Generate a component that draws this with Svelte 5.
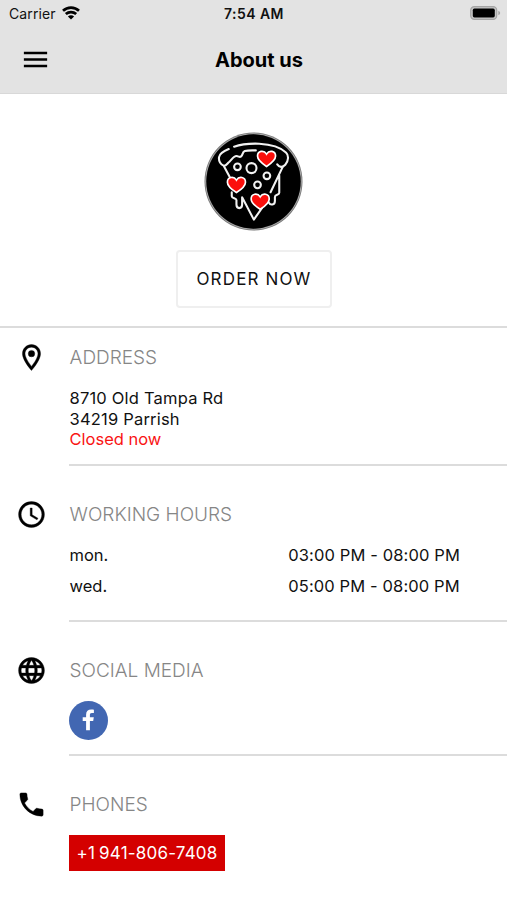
<script lang="ts">
    interface Hours {
        day: string;
        time: string;
    }

    const address = ["8710 Old Tampa Rd", "34219 Parrish"];
    const hours: Hours[] = [
        { day: "mon.", time: "03:00 PM - 08:00 PM" },
        { day: "wed.", time: "05:00 PM - 08:00 PM" },
    ];
    const phone = "+1 941-806-7408";
    const heart =
        "M0 23 C-11 16 -27 5 -27 -8 C-27 -24 -8 -27 0 -14 C8 -27 27 -24 27 -8 C27 5 11 16 0 23Z";
    const hearts = ["translate(216 103)", "translate(126 181)", "translate(197 231)"];
</script>

<div class="page">
    <div class="status">
        <div class="carrier">
            <span>Carrier</span>
            <svg class="wifi" viewBox="0 0 18 14">
                <path d="M1 4.8C5.5 .6 12.5 .6 17 4.8" />
                <path d="M3.8 8.1c3-2.7 7.4-2.7 10.4 0" />
                <path class="dot" d="M5.9 10.4c1.8-1.5 4.4-1.5 6.2 0L9 13.5z" />
            </svg>
        </div>
        <span class="clock">7:54 AM</span>
        <svg class="battery" viewBox="0 0 31 14">
            <rect x="0.7" y="0.7" width="26" height="12.6" rx="3.6" fill="#c6c6c6" stroke="#a5a5a5" stroke-width="1.2" />
            <rect x="2.8" y="2.6" width="22" height="8.8" rx="1.6" fill="#000" />
            <path d="M28.3 4.8q1.9.7 1.9 2.2t-1.9 2.2z" fill="#a5a5a5" />
        </svg>
    </div>

    <header>
        <button class="menu" aria-label="Menu">
            <svg viewBox="0 0 24 24"><path d="M3 18h18v-2H3v2zm0-5h18v-2H3v2zm0-7v2h18V6H3z" /></svg>
        </button>
        <h1>About us</h1>
    </header>

    <div class="hero">
        <svg class="logo" viewBox="29 23 296 296">
            <circle cx="177" cy="171" r="146.5" fill="#777" />
            <circle cx="177" cy="171" r="143" fill="none" stroke="#ddd" stroke-width="1.5" />
            <circle cx="177" cy="171" r="141" fill="#000" />
            <g class="lines">
                <path d="M103 74C88 80 76 88 74 98c-2 12 5 23 14 26 8 1 10-7 17-12 8-8 13-17 21-17 7 0 9 5 14 1 6-5 3-13 11-16 10-3 22-2 33-2" />
                <path d="M119 67c22-8 47-10 75-9 36 2 63 10 80 26 9 8 8 26-2 37-8 9-18 8-24-1" />
                <path d="M89 126l19 35M112 203v12c0 7 14 5 14 11v14c0 14 17 14 17 0v-22l35 67 24-34M264 128l-36 75M254 153v52c0 7-13 4-13 12v12c0 13-14 14-18 5" />
                <circle cx="129" cy="127" r="10" />
                <circle cx="171" cy="131" r="15" />
                <circle cx="217" cy="154" r="10" />
                <circle cx="189" cy="181" r="10" />
            </g>
            {#each hearts as place}
                <path class="heart" d={heart} transform={place} />
            {/each}
        </svg>
        <button class="order">ORDER NOW</button>
    </div>

    <section>
        <svg class="icon" viewBox="0 0 24 24">
            <path d="M12 2C8.13 2 5 5.13 5 9c0 5.25 7 13 7 13s7-7.75 7-13c0-3.87-3.13-7-7-7zM7 9c0-2.76 2.24-5 5-5s5 2.24 5 5c0 2.88-2.88 7.19-5 9.88C9.92 16.21 7 11.85 7 9z" />
            <circle cx="12" cy="9" r="2.5" />
        </svg>
        <div class="content">
            <h2>ADDRESS</h2>
            <div class="address">
                {#each address as line}
                    <div class="line">{line}</div>
                {/each}
                <div class="closed">Closed now</div>
            </div>
        </div>
    </section>

    <section>
        <svg class="icon" viewBox="0 0 24 24">
            <path d="M11.99 2C6.47 2 2 6.48 2 12s4.47 10 9.99 10C17.52 22 22 17.52 22 12S17.52 2 11.99 2zM12 20c-4.42 0-8-3.58-8-8s3.58-8 8-8 8 3.58 8 8-3.58 8-8 8zm.5-13H11v6l5.25 3.15.75-1.23-4.5-2.67z" />
        </svg>
        <div class="content">
            <h2>WORKING HOURS</h2>
            <div class="hours">
                {#each hours as { day, time }}
                    <div class="row">
                        <span>{day}</span>
                        <span class="time">{time}</span>
                    </div>
                {/each}
            </div>
        </div>
    </section>

    <section>
        <svg class="icon" viewBox="0 0 24 24">
            <path d="M11.99 2C6.47 2 2 6.48 2 12s4.47 10 9.99 10C17.52 22 22 17.52 22 12S17.52 2 11.99 2zm6.93 6h-2.95c-.32-1.25-.78-2.45-1.38-3.56 1.84.63 3.37 1.91 4.33 3.56zM12 4.04c.83 1.2 1.48 2.53 1.91 3.96h-3.82c.43-1.43 1.08-2.76 1.91-3.96zM4.26 14C4.1 13.36 4 12.69 4 12s.1-1.36.26-2h3.38c-.08.66-.14 1.32-.14 2s.06 1.34.14 2H4.26zm.82 2h2.95c.32 1.25.78 2.45 1.38 3.56-1.84-.63-3.37-1.9-4.33-3.56zm2.95-8H5.08c.96-1.66 2.49-2.93 4.33-3.56C8.81 5.55 8.35 6.75 8.03 8zM12 19.96c-.83-1.2-1.48-2.53-1.91-3.96h3.82c-.43 1.43-1.08 2.76-1.91 3.96zM14.34 14H9.66c-.09-.66-.16-1.32-.16-2s.07-1.35.16-2h4.68c.09.65.16 1.32.16 2s-.07 1.34-.16 2zm.25 5.56c.6-1.11 1.06-2.31 1.38-3.56h2.95c-.96 1.65-2.49 2.93-4.33 3.56zM16.36 14c.08-.66.14-1.32.14-2s-.06-1.34-.14-2h3.38c.16.64.26 1.31.26 2s-.1 1.36-.26 2h-3.38z" />
        </svg>
        <div class="content">
            <h2>SOCIAL MEDIA</h2>
            <svg class="facebook" viewBox="0 0 39 39">
                <circle cx="19.5" cy="19.5" r="19.5" fill="#4267b2" />
                <path d="M17.1 29.3V20h-3.4v-3.7h3.4v-2.8c0-3.4 2-5 5-5 1.3 0 2.3.1 2.8.2v3.3h-2c-1.6 0-2 .8-2 2v2.3h3.9l-.6 3.7h-3.3v9.3z" fill="#fff" />
            </svg>
        </div>
    </section>

    <section>
        <svg class="icon" viewBox="0 0 24 24">
            <path d="M6.62 10.79c1.44 2.83 3.76 5.14 6.59 6.59l2.2-2.2c.27-.27.67-.36 1.02-.24 1.12.37 2.33.57 3.57.57.55 0 1 .45 1 1V20c0 .55-.45 1-1 1-9.39 0-17-7.61-17-17 0-.55.45-1 1-1h3.5c.55 0 1 .45 1 1 0 1.25.2 2.45.57 3.57.11.35.03.74-.25 1.02l-2.2 2.2z" />
        </svg>
        <div class="content">
            <h2>PHONES</h2>
            <button class="phone">{phone}</button>
        </div>
    </section>
</div>

<style>
    :global(body) {
        background: #fff;
    }

    .page {
        height: 900px;
        overflow: hidden;
        box-sizing: border-box;
        background: #fff;
        color: #111;
        font-family: Inter, "Liberation Sans", sans-serif;
        font-size: 16.5px;
        line-height: 20.6px;
    }

    button {
        font-family: inherit;
        padding: 0;
        border: 0;
        background: none;
    }

    svg {
        display: block;
    }

    .status {
        display: grid;
        grid-template-columns: 1fr auto 1fr;
        align-items: center;
        height: 25px;
        padding: 2px 6px 0 9px;
        box-sizing: border-box;
        background: #e3e3e3;
        font-size: 14px;
        line-height: 20px;
    }

    .carrier {
        display: flex;
        align-items: center;
        gap: 6px;
        letter-spacing: 0.1px;
    }

    .wifi {
        width: 18px;
        height: 14px;
        margin-top: -2px;
        fill: none;
        stroke: #000;
        stroke-width: 2.7;
    }

    .wifi .dot {
        fill: #000;
        stroke: none;
    }

    .clock {
        margin-right: 2px;
        font-weight: 600;
        letter-spacing: 0.45px;
    }

    .battery {
        width: 31px;
        height: 14px;
        margin-top: -2px;
        justify-self: end;
    }

    header {
        display: grid;
        grid-template-columns: 80px 1fr 69px;
        align-items: center;
        height: 69px;
        box-sizing: border-box;
        border-bottom: 1px solid #d8d8d8;
        background: #e3e3e3;
    }

    .menu {
        margin: 1px 0 0 19.5px;
        width: 31px;
    }

    h1 {
        margin: 2px 0 0;
        text-align: center;
        font-size: 20px;
        font-weight: 700;
        color: #000;
    }

    .hero {
        display: flex;
        flex-direction: column;
        align-items: center;
        height: 234px;
        padding-top: 38px;
        box-sizing: border-box;
        border-bottom: 2px solid #dcdcdc;
    }

    .logo {
        width: 99px;
        height: 99px;
        margin-bottom: 19px;
    }

    .lines {
        fill: none;
        stroke: #f2f2f2;
        stroke-width: 6.2;
        stroke-linecap: round;
        stroke-linejoin: round;
    }

    .heart {
        fill: #fb0f0c;
        stroke: #fff;
        stroke-width: 5;
    }

    .order {
        width: 156px;
        height: 58px;
        padding-left: 1px;
        border: 2px solid #efefef;
        border-radius: 4px;
        font-size: 17px;
        letter-spacing: 1.15px;
        color: #111;
    }

    section {
        display: grid;
        grid-template-columns: 69px 1fr;
    }

    .icon {
        width: 31px;
        height: 31px;
        margin: 33px 0 0 15.5px;
        stroke: #000;
        stroke-width: 0.3;
    }

    .content {
        padding: 37px 0 14px;
        border-bottom: 2px solid #dcdcdc;
    }

    .hero + section .icon {
        margin-top: 13.5px;
    }

    .hero + section .content {
        padding-top: 18px;
    }

    section:last-child .content {
        border-bottom: 0;
    }

    h2 {
        margin: 0 0 18px;
        padding-left: 0.6px;
        font-size: 19px;
        font-weight: 350;
        line-height: 24px;
        color: #868686;
    }

    .address,
    .hours {
        padding-left: 0.5px;
    }

    .line {
        letter-spacing: 0.2px;
    }

    .closed {
        color: #f91414;
    }

    .hours {
        display: grid;
        gap: 10.5px;
        padding-bottom: 9.5px;
    }

    .row {
        display: grid;
        grid-template-columns: 1fr 1fr;
    }

    .time {
        letter-spacing: 0.12px;
    }

    .facebook {
        width: 39px;
        height: 39px;
    }

    .phone {
        width: 156px;
        height: 36px;
        background: #d40000;
        color: #fff;
        font-size: 17px;
        letter-spacing: 0.2px;
        word-spacing: -1px;
    }
</style>
